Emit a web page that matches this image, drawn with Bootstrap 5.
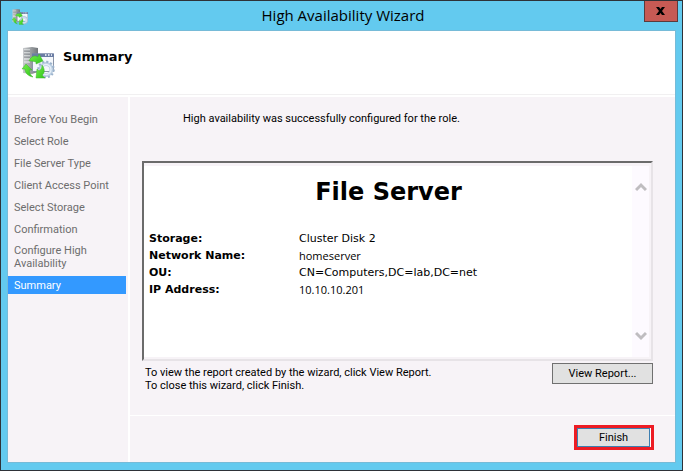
<!DOCTYPE html>
<html lang="en">
<head>
<meta charset="utf-8">
<meta name="viewport" content="width=device-width, initial-scale=1">
<title>High Availability Wizard</title>
<link href="https://cdn.jsdelivr.net/npm/bootstrap@5.3.0/dist/css/bootstrap.min.css" rel="stylesheet">
<style>
body{font:11px/13px Roboto,"Liberation Sans",sans-serif;color:#000;background:#63caef}
.wizard{border:1px solid #2e3238;padding:0 7px 8px;background:#63caef}
.titlebar{height:30px;margin-right:-3px}
.titlebar .side{width:36px}
.titlebar h1{font:15px/28px "Open Sans",sans-serif}
.close-x{width:34px;height:21px;background:#c65a54;border:1px solid #5b3a3c;border-top:0;padding:0;display:flex;align-items:center;justify-content:center}
.pane{background:#f7f3f7;box-shadow:0 0 0 1px #76bbd8}
.banner{height:66px;background:#fff;padding:0 13px;border-bottom:2px solid #fff;box-shadow:inset 0 -1px #f1f0f1}
.banner h2{font:bold 13px/16px "DejaVu Sans",Verdana,sans-serif;margin:0 0 13px 8px}
.steps{width:122px;border-right:2px solid #fff;padding:12px 2px 0 0}
.steps a{display:block;color:#6d6d6d;text-decoration:none;padding:4px 6px 5px}
.steps a.two-line{padding:3px 6px 6px}
.steps a.current{background:#3399ff;color:#fff;padding:3px 6px 2px}
.intro{padding:15px 0 0 41px;margin-bottom:36px}
.work{padding:0 22px 0 12px}
.report{border:2px solid;border-color:#6b6b6b #e7e3e7 #e7e3e7 #6b6b6b;height:200px;padding:3px 2px 2px 0}
.report-body{background:#fff;padding:11px 4px 0 5px}
.report-body h3{font:bold 24px/30px "DejaVu Sans",Verdana,sans-serif;margin:0 0 23px}
.report table{font:11px/17px "DejaVu Sans",Verdana,sans-serif}
.report th{width:150px;padding:0}
.report td{padding:0}
.report .plain{font:11px/17px "Open Sans",Tahoma,sans-serif}
.scroller{width:17px;background:#fdfaff;padding:16px 0}
.scroller button{line-height:0}
.note{padding:5px 0 0 3px}
.push{background:#e1e1e1;border:1px solid #707070;font-size:11px;line-height:13px;padding:0;color:#000}
.view-btn{width:101px;height:21px;margin-top:2px}
.footer-bar{border-top:1px solid #fff;padding:9px 21px 12px}
.ring{border:3px solid #ed1c24;background:#fff;padding:0 1px 0 0}
.finish-btn{width:73px;height:19px;border-color:#3c7fb1}
</style>
<script src="https://cdn.jsdelivr.net/npm/bootstrap@5.3.0/dist/js/bootstrap.bundle.min.js"></script>
</head>
<body>
<svg width="0" height="0" class="position-absolute" aria-hidden="true">
<defs>
<linearGradient id="metal"><stop offset="0" stop-color="#c9cbcd"/><stop offset=".45" stop-color="#a0a4a7"/><stop offset="1" stop-color="#72777b"/></linearGradient>
<linearGradient id="leaf" x2="1" y2="1"><stop offset="0" stop-color="#7bf04d"/><stop offset="1" stop-color="#2cc41a"/></linearGradient>
<symbol id="cluster" viewBox="0 0 32 32">
<path d="M1 1l9-1 6 1v24l-6 2-9-1z" fill="url(#metal)"/>
<path d="M2 3h6M2 6h6M2 9h6M2 12h6M2 15h6" stroke="#edf0f1"/><path d="M2 4h6M2 7h6M2 10h6" stroke="#6f7478" stroke-width=".7"/>
<path d="M10.500 7h21v17.500h-21z" fill="#f4f7fb" stroke="#8a94a8"/>
<path d="M10 6.500h22v3.500H10z" fill="#6b7da4"/><path d="M23 8h1.500M26 8h1.500M29 8h1" stroke="#fff" stroke-width="1.500"/>
<circle cx="24" cy="22.500" r="5.500" fill="none" stroke="#bccfe2" stroke-width="4"/>
<circle cx="24" cy="22.500" r="7.800" fill="none" stroke="#9bb3cd" stroke-width="2" stroke-dasharray="2.100 1.980"/>
<circle cx="24" cy="22.500" r="5" fill="none" stroke="#e7f0f8" stroke-width="1.300"/>
<path d="M7 14c2-5 6-6 9-4l1-3 4 7-7 3v-2c-3-1-5-1-7-1z" fill="url(#leaf)" stroke="#3fb52c" stroke-width=".5"/>
<path d="M4 17l6 6H7.500c0 3 1 5 3.500 7-5-1-8-4-8-8H0z" fill="url(#leaf)" stroke="#3fb52c" stroke-width=".5"/>
<path d="M14 31l1-9 2 2c2-1 3-3 3-6 3 4 3 8 0 10l3 3z" fill="url(#leaf)" stroke="#3fb52c" stroke-width=".5"/>
</symbol>
</defs>
</svg>
<div class="wizard d-flex flex-column min-vh-100">
  <header class="titlebar d-flex justify-content-between">
    <div class="side"><svg class="mt-2 ms-1 d-block" width="16" height="16" aria-hidden="true"><use href="#cluster"/></svg></div>
    <h1 class="m-0">High Availability Wizard</h1>
    <div class="side"><button type="button" class="close-x ms-auto" aria-label="Close"><svg width="9" height="8" viewBox="0 0 9 8"><path d="M0 0h3l1.500 2L6 0h3L6 4l3 4H6L4.500 6 3 8H0l3-4z"/></svg></button></div>
  </header>
  <div class="pane flex-grow-1 d-flex flex-column">
    <div class="banner d-flex align-items-center">
      <svg width="34" height="32" aria-hidden="true"><use href="#cluster"/></svg>
      <h2>Summary</h2>
    </div>
    <div class="d-flex flex-grow-1">
      <nav class="steps flex-shrink-0" aria-label="Wizard steps">
        <a href="#">Before You Begin</a>
        <a href="#">Select Role</a>
        <a href="#">File Server Type</a>
        <a href="#">Client Access Point</a>
        <a href="#">Select Storage</a>
        <a href="#">Confirmation</a>
        <a href="#" class="two-line">Configure High Availability</a>
        <a href="#" class="current" aria-current="step">Summary</a>
      </nav>
      <main class="flex-grow-1 d-flex flex-column">
        <div class="work flex-grow-1">
          <p class="intro">High availability was successfully configured for the role.</p>
          <section class="report d-flex">
            <div class="report-body flex-grow-1">
              <h3 class="text-center">File Server</h3>
              <table>
                <tr><th scope="row">Storage:</th><td>Cluster Disk 2</td></tr>
                <tr><th scope="row">Network Name:</th><td class="plain">homeserver</td></tr>
                <tr><th scope="row">OU:</th><td>CN=Computers,DC=lab,DC=net</td></tr>
                <tr><th scope="row">IP Address:</th><td class="plain">10.10.10.201</td></tr>
              </table>
            </div>
            <div class="scroller d-flex flex-column justify-content-between align-items-center">
              <button type="button" class="border-0 bg-transparent p-0" aria-label="Scroll up"><svg width="12" height="10" viewBox="0 0 12 10"><path d="M1 8l5-5 5 5" fill="none" stroke="#bfbdc0" stroke-width="3"/></svg></button>
              <button type="button" class="border-0 bg-transparent p-0" aria-label="Scroll down"><svg width="12" height="10" viewBox="0 0 12 10"><path d="M1 2l5 5 5-5" fill="none" stroke="#bfbdc0" stroke-width="3"/></svg></button>
            </div>
          </section>
          <div class="d-flex justify-content-between align-items-start">
            <p class="note m-0">To view the report created by the wizard, click View Report.<br>To close this wizard, click Finish.</p>
            <button type="button" class="push view-btn">View Report...</button>
          </div>
        </div>
        <footer class="footer-bar d-flex justify-content-end">
          <div class="ring d-flex"><button type="button" class="push finish-btn">Finish</button></div>
        </footer>
      </main>
    </div>
  </div>
</div>
</body>
</html>
